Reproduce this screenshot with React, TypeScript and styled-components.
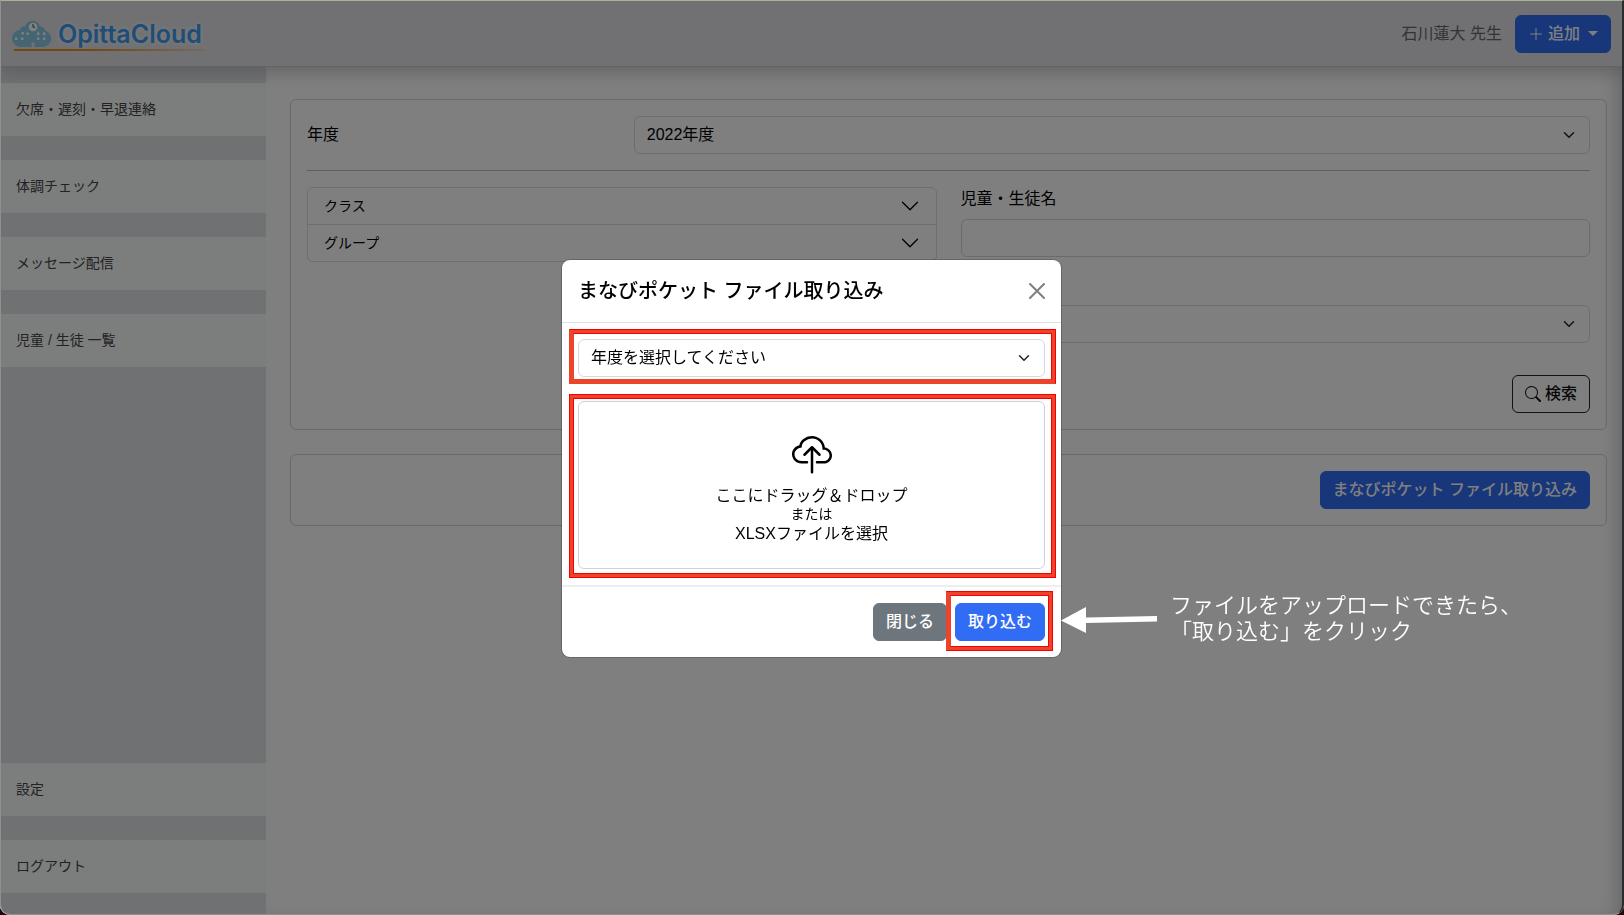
import React from "react";
import styled, { createGlobalStyle } from "styled-components";
import { BsChevronDown, BsCloudUpload, BsPlusLg, BsSearch } from "react-icons/bs";

const GlobalStyle = createGlobalStyle`
  *, *::before, *::after { box-sizing: border-box; }
  body {
    margin: 0;
    background: #26060c;
    color: #000;
    font-family: "Liberation Sans", "Noto Sans CJK JP", sans-serif;
    font-size: 16px;
    line-height: 24px;
  }
  button, input, select { font: inherit; color: inherit; }
`;

const Page = styled.div`
  display: flex;
  flex-direction: column;
  min-height: 100vh;
  padding: 1px 1px 0 0;
  background: #fff;
  border-radius: 0 0 10px 10px;
  overflow: hidden;
`;

const Header = styled.header`
  position: relative;
  z-index: 1;
  display: flex;
  align-items: center;
  justify-content: space-between;
  height: 66px;
  padding: 0 12px;
  background: #e2e3e6;
  border-bottom: 1px solid #c3c6cb;
  box-shadow: 0 8px 16px rgba(0, 0, 0, 0.15);
`;

const Brand = styled.a`
  display: flex;
  align-items: center;
  gap: 6px;
  position: relative;
  color: #3a9bf0;
  font-family: Inter, "Liberation Sans", sans-serif;
  font-size: 25px;
  font-weight: 600;
  line-height: 32px;
  text-decoration: none;
  text-shadow: 0 0 4px #fff;

  &::after {
    content: "";
    position: absolute;
    left: 2px;
    right: -4px;
    bottom: -1px;
    height: 2px;
    background: linear-gradient(to right, #e8902a 40%, rgba(232, 170, 100, 0.2));
  }
`;

const HeaderTools = styled.div`
  display: flex;
  align-items: center;
  gap: 13px;
  color: #66686b;
`;

const Button = styled.button<{ $tone: "primary" | "secondary" | "outline" }>`
  display: inline-flex;
  align-items: center;
  justify-content: center;
  gap: 4px;
  height: 38px;
  padding: 0 12px;
  border: 1px solid
    ${({ $tone }) => ($tone === "primary" ? "#316cf4" : $tone === "secondary" ? "#6d757d" : "#212529")};
  border-radius: 6px;
  background: ${({ $tone }) =>
    $tone === "primary" ? "#316cf4" : $tone === "secondary" ? "#6d757d" : "transparent"};
  color: ${({ $tone }) => ($tone === "outline" ? "#111" : "#fff")};
  font-weight: 500;
  white-space: nowrap;
`;

const Caret = styled.span`
  margin-left: 4px;
  border: 5px solid transparent;
  border-top-color: currentColor;
  border-bottom: 0;
`;

const Body = styled.div`
  display: flex;
  flex: 1;
`;

const Sidebar = styled.nav`
  display: flex;
  flex-direction: column;
  gap: 24px;
  flex: 0 0 266px;
  padding: 16px 0 22px;
  background: #e0e2e6;
`;

const NavItem = styled.a<{ $pushDown?: boolean }>`
  padding: 16px;
  margin-top: ${({ $pushDown }) => ($pushDown ? "auto" : "0")};
  background: #f9fcfb;
  color: #444;
  font-size: 14px;
  line-height: 21px;
  text-decoration: none;
`;

const Main = styled.main`
  display: flex;
  flex: 1;
  flex-direction: column;
  gap: 24px;
  padding: 32px 16px 24px 24px;
  box-shadow: inset -12px 0 20px -8px rgba(0, 0, 0, 0.22);
`;

const Card = styled.section`
  padding: 16px;
  border: 1px solid #d2d2d2;
  border-radius: 6px;
`;

const ActionCard = styled(Card)`
  display: flex;
  justify-content: flex-end;
`;

const YearRow = styled.div`
  display: grid;
  grid-template-columns: repeat(4, 1fr);
  align-items: center;
  gap: 24px;
`;

const YearSelect = styled.div`
  grid-column: span 3;
`;

const Divider = styled.hr`
  margin: 16px 0;
  border: 0;
  border-top: 1px solid #bfbfbf;
`;

const FilterGrid = styled.div`
  display: grid;
  grid-template-columns: 1fr 1fr;
  align-items: start;
  gap: 24px;
`;

const Accordion = styled.div`
  border: 1px solid #dadcde;
  border-radius: 6px;
`;

const AccordionButton = styled.button`
  display: flex;
  align-items: center;
  justify-content: space-between;
  width: 100%;
  height: 36px;
  padding: 0 16px;
  border: 0;
  background: transparent;
  font-size: 14px;

  & + & {
    height: 37px;
    border-top: 1px solid #dadcde;
  }
`;

const Fields = styled.div`
  display: flex;
  flex-direction: column;
  gap: 48px;
`;

const Field = styled.div`
  display: flex;
  flex-direction: column;
  gap: 8px;
`;

const TextInput = styled.input`
  width: 100%;
  height: 38px;
  padding: 0 12px;
  border: 1px solid #d3d6da;
  border-radius: 6px;
  background: transparent;
`;

const SelectBox = styled.div`
  position: relative;

  select {
    display: block;
    width: 100%;
    height: 38px;
    padding: 0 36px 0 12px;
    border: 1px solid #d6dadf;
    border-radius: 6px;
    background: transparent;
    appearance: none;
  }

  svg {
    position: absolute;
    top: 13px;
    right: 15px;
    pointer-events: none;
  }
`;

const SearchRow = styled.div`
  display: flex;
  justify-content: flex-end;
  margin-top: 32px;
`;

const Backdrop = styled.div`
  position: fixed;
  inset: 0;
  z-index: 10;
  display: flex;
  align-items: center;
  justify-content: center;
  padding-top: 2px;
  border: 1px solid #8f9190;
  border-top-color: #a4b495;
  border-right: 2px solid #2a2c2e;
  border-radius: 0 0 10px 10px;
  background: rgba(0, 0, 0, 0.5);
`;

const Dialog = styled.div`
  position: relative;
  width: 499px;
  border-radius: 8px;
  background: #fff;
  box-shadow: 0 0 0 1px rgba(0, 0, 0, 0.2);
`;

const DialogHeader = styled.div`
  display: flex;
  align-items: center;
  justify-content: space-between;
  height: 63px;
  padding: 0 16px;
  border-bottom: 1px solid #dee2e6;
`;

const DialogTitle = styled.h2`
  margin: 0;
  font-size: 20px;
  font-weight: 500;
  line-height: 30px;
`;

const CloseButton = styled.button`
  display: flex;
  padding: 0;
  border: 0;
  background: transparent;
  color: #7f7f7f;
`;

const DialogBody = styled.div`
  display: flex;
  flex-direction: column;
  gap: 24px;
  padding: 16px;
`;

const DialogFooter = styled.div`
  display: flex;
  justify-content: flex-end;
  gap: 8px;
  padding: 16px;
  border-top: 2px solid #eceef0;
`;

const Highlight = styled.div<{ $inset: string; $sides?: string }>`
  position: relative;

  &::before,
  &::after {
    content: "";
    position: absolute;
    inset: ${({ $inset }) => $inset};
    pointer-events: none;
  }

  &::before {
    border: 5px solid;
    border-color: ${({ $sides = "#f40000" }) => $sides};
  }

  &::after {
    border: 3px solid #ec432b;
    margin: 1px;
  }
`;

const DropZone = styled.label`
  display: flex;
  flex-direction: column;
  align-items: center;
  height: 168px;
  padding-top: 34px;
  border: 1px solid #d0d3d6;
  border-radius: 6px;
  text-align: center;
  line-height: 19px;

  svg {
    margin-bottom: 10px;
  }

  small {
    font-size: 14px;
  }

  input {
    position: absolute;
    opacity: 0;
    width: 1px;
    height: 1px;
  }
`;

const Annotation = styled.div`
  position: absolute;
  left: 100%;
  bottom: 12px;
  display: flex;
  align-items: center;
  gap: 12px;
  color: #fff;
  font-size: 22px;
  font-weight: 350;
  line-height: 26px;
  white-space: nowrap;

  p {
    margin: 0;
  }
`;

const SelectArrow = () => (
  <svg width="12" height="12" viewBox="0 0 16 16" fill="none" aria-hidden="true">
    <path d="m2 5 6 6 6-6" stroke="#212529" strokeWidth="2" strokeLinecap="round" strokeLinejoin="round" />
  </svg>
);

const LogoMark = () => (
  <svg width="40" height="28" viewBox="0 0 40 28" aria-hidden="true">
    <path
      d="M9 27a8.500 8.500 0 0 1-1-17 4 4 0 0 1 5-3.500C14 3 17 1 20.500 1S27 3 28 6.500a5 5 0 0 1 5 4A8.400 8.400 0 0 1 31 27H22.500v-4.500h-3V27z"
      fill="#8ccbe6"
    />
    <circle cx="21" cy="7" r="4.300" fill="#fff" />
    <path d="M21 4v3.200h2.200" fill="none" stroke="#444" strokeWidth="1" />
    <g fill="#fff">
      {[[4, 18.5], [10, 18.5], [10.5, 13], [15.5, 13.5], [26, 13.5], [32, 13.5], [26, 18.5], [32, 18.5]].map(
        ([x, y]) => (
          <rect key={`${x}-${y}`} x={x - 1} y={y - 1} width="2.400" height="2.400" />
        ),
      )}
    </g>
  </svg>
);

export default function App() {
  return (
    <>
      <GlobalStyle />
      <Page>
        <Header>
          <Brand href="#">
            <LogoMark />
            OpittaCloud
          </Brand>
          <HeaderTools>
            <span>石川蓮大 先生</span>
            <Button $tone="primary" type="button">
              <BsPlusLg />
              追加
              <Caret />
            </Button>
          </HeaderTools>
        </Header>
        <Body>
          <Sidebar>
            <NavItem href="#absence">欠席・遅刻・早退連絡</NavItem>
            <NavItem href="#health">体調チェック</NavItem>
            <NavItem href="#messages">メッセージ配信</NavItem>
            <NavItem href="#students">児童 / 生徒 一覧</NavItem>
            <NavItem href="#settings" $pushDown>
              設定
            </NavItem>
            <NavItem href="#logout">ログアウト</NavItem>
          </Sidebar>
          <Main>
            <Card>
              <YearRow>
                <label htmlFor="year">年度</label>
                <YearSelect>
                  <SelectBox>
                    <select id="year">
                      <option>2022年度</option>
                    </select>
                    <SelectArrow />
                  </SelectBox>
                </YearSelect>
              </YearRow>
              <Divider />
              <FilterGrid>
                <Accordion>
                  <AccordionButton type="button">
                    クラス
                    <BsChevronDown size={20} />
                  </AccordionButton>
                  <AccordionButton type="button">
                    グループ
                    <BsChevronDown size={20} />
                  </AccordionButton>
                </Accordion>
                <Fields>
                  <Field>
                    <label htmlFor="student">児童・生徒名</label>
                    <TextInput id="student" type="text" />
                  </Field>
                  <SelectBox>
                    <select aria-label="状態" />
                    <SelectArrow />
                  </SelectBox>
                </Fields>
              </FilterGrid>
              <SearchRow>
                <Button $tone="outline" type="button">
                  <BsSearch />
                  検索
                </Button>
              </SearchRow>
            </Card>
            <ActionCard>
              <Button $tone="primary" type="button">
                まなびポケット ファイル取り込み
              </Button>
            </ActionCard>
          </Main>
        </Body>
      </Page>
      <Backdrop>
        <Dialog role="dialog" aria-modal="true" aria-labelledby="dialog-title">
          <DialogHeader>
            <DialogTitle id="dialog-title">まなびポケット ファイル取り込み</DialogTitle>
            <CloseButton type="button" aria-label="閉じる">
              <svg width="16" height="16" viewBox="0 0 16 16" fill="none" aria-hidden="true">
                <path d="M1 1l14 14M15 1L1 15" stroke="currentColor" strokeWidth="2" strokeLinecap="round" />
              </svg>
            </CloseButton>
          </DialogHeader>
          <DialogBody>
            <Highlight $inset="-10px -11px -7px -9px" $sides="#f40000 #f40000 #ec432b #ec432b">
              <SelectBox>
                <select aria-label="年度">
                  <option>年度を選択してください</option>
                </select>
                <SelectArrow />
              </SelectBox>
            </Highlight>
            <Highlight $inset="-7px -11px -9px -9px">
              <DropZone>
                <BsCloudUpload size={40} />
                <span>ここにドラッグ＆ドロップ</span>
                <small>または</small>
                <span>XLSXファイルを選択</span>
                <input type="file" accept=".xlsx" />
              </DropZone>
            </Highlight>
          </DialogBody>
          <DialogFooter>
            <Button $tone="secondary" type="button">
              閉じる
            </Button>
            <Highlight $inset="-12px -8px -10px -9px" $sides="#f40000 #f40000 #f40000 #ec432b">
              <Button $tone="primary" type="button">
                取り込む
              </Button>
            </Highlight>
          </DialogFooter>
          <Annotation>
            <svg width="97" height="28" viewBox="0 0 97 28" aria-hidden="true">
              <path d="M0 15.500 25 2v10.500L96 11v5.500L25 18v10z" fill="#fff" />
            </svg>
            <p>
              ファイルをアップロードできたら、
              <br />
              「取り込む」をクリック
            </p>
          </Annotation>
        </Dialog>
      </Backdrop>
    </>
  );
}
